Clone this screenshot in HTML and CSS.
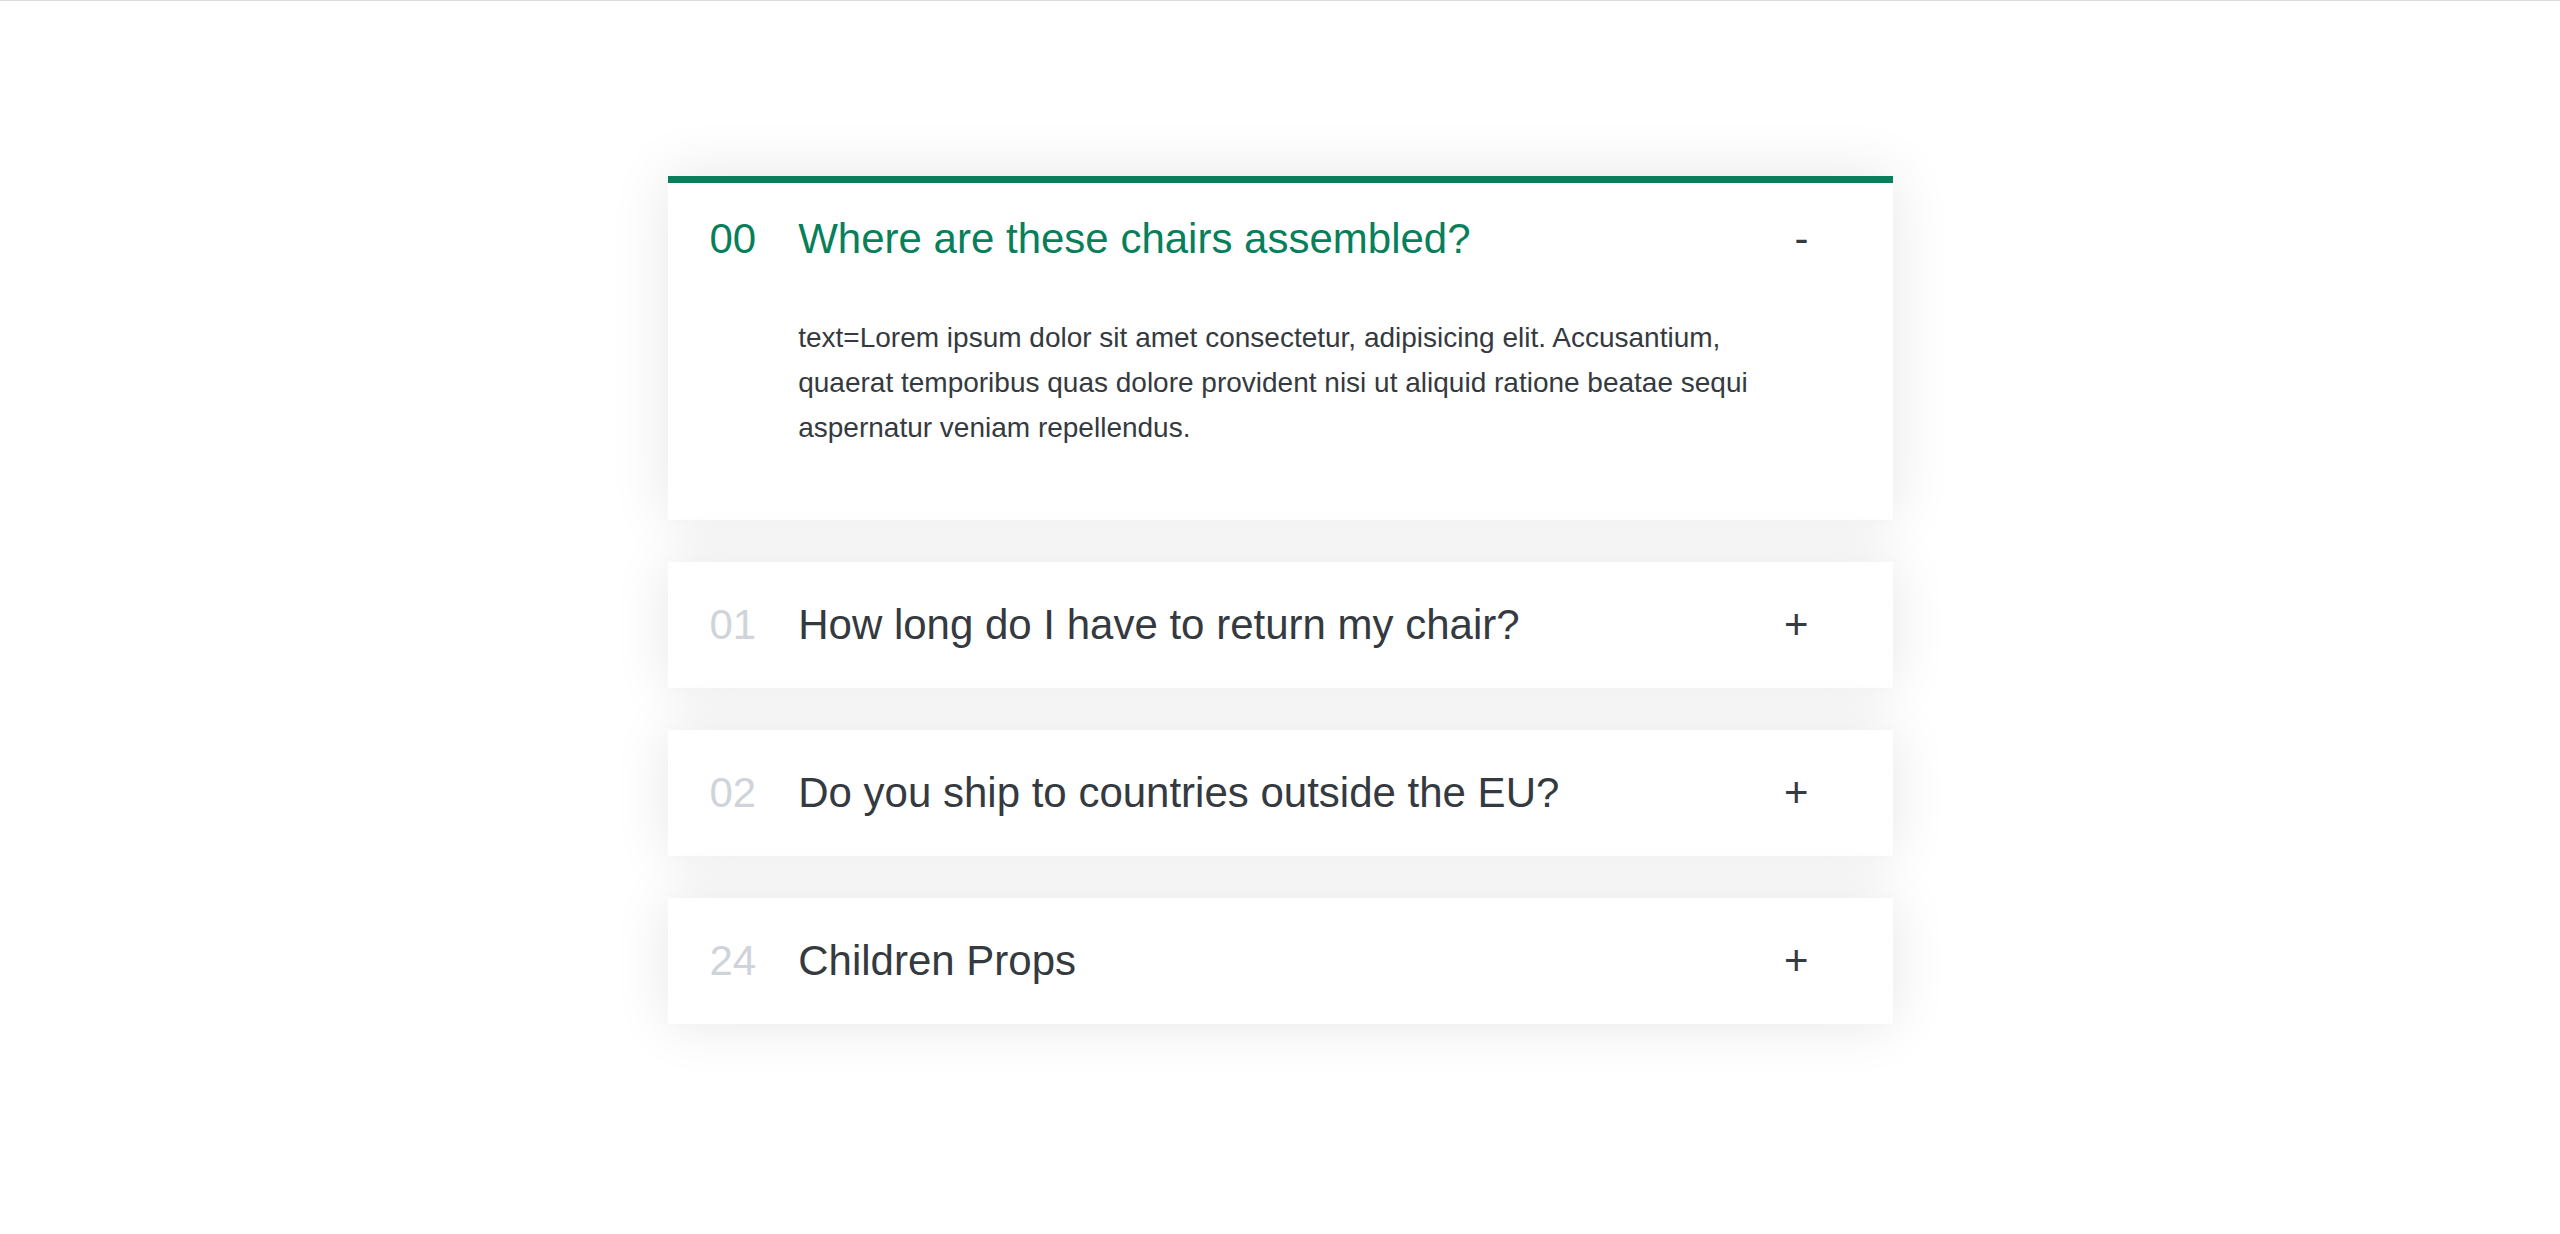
FILE: index.html
```html
<!DOCTYPE html>
<html lang="en">
<head>
<meta charset="utf-8">
<title>Accordion</title>
<link rel="stylesheet" href="styles.css">
</head>
<body>
<div class="topline"></div>
<div class="accordion">
  <div class="item open">
    <p class="number">00</p>
    <p class="title">Where are these chairs assembled?</p>
    <p class="icon">-</p>
    <div class="content-box">text=Lorem ipsum dolor sit amet consectetur, adipisicing elit. Accusantium, quaerat temporibus quas dolore provident nisi ut aliquid ratione beatae sequi aspernatur veniam repellendus.</div>
  </div>
  <div class="item">
    <p class="number">01</p>
    <p class="title">How long do I have to return my chair?</p>
    <p class="icon">+</p>
  </div>
  <div class="item">
    <p class="number">02</p>
    <p class="title">Do you ship to countries outside the EU?</p>
    <p class="icon">+</p>
  </div>
  <div class="item">
    <p class="number">24</p>
    <p class="title">Children Props</p>
    <p class="icon">+</p>
  </div>
</div>
</body>
</html>
```

FILE: styles.css
```css
* {
  margin: 0;
  padding: 0;
  box-sizing: border-box;
}

body {
  margin: 0;
  font-family: "Liberation Sans", Arial, sans-serif;
  color: #343a40;
  background: #fff;
  line-height: 1;
}

.topline {
  height: 1px;
  background: #dcdcdc;
}

.accordion {
  width: 1225px;
  margin: 175px auto;
  display: flex;
  flex-direction: column;
  gap: 42px;
}

.item {
  box-shadow: 0 0 56px rgba(0, 0, 0, 0.1);
  padding: 35px 84px 35px 42px;
  border-top: 7px solid #fff;
  border-bottom: 7px solid #fff;
  background: #fff;
  display: grid;
  grid-template-columns: auto 1fr auto;
  column-gap: 42px;
  row-gap: 56px;
  align-items: center;
}

.number {
  font-size: 42px;
  color: #ced4da;
}

.title,
.icon {
  font-size: 42px;
}

.content-box {
  grid-column: 2 / -1;
  padding-bottom: 28px;
  font-size: 28px;
  line-height: 1.6;
}

.open {
  border-top: 7px solid #087f5b;
}

.open .number,
.open .title {
  color: #087f5b;
}
```
